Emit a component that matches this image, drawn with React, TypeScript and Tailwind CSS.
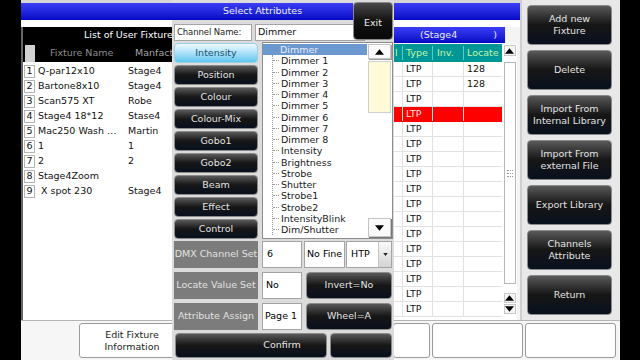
import React from 'react'

const fixtures = [
  { name: 'Q-par12x10', maker: 'Stage4' },
  { name: 'Bartone8x10', maker: 'Stage4' },
  { name: 'Scan575 XT', maker: 'Robe' },
  { name: 'Stage4 18*12', maker: 'Stase4' },
  { name: 'Mac250 Wash …', maker: 'Martin' },
  { name: '1', maker: '1' },
  { name: '2', maker: '2' },
  { name: 'Stage4Zoom', maker: '' },
  { name: ' X spot 230', maker: 'Stage4' },
]

const categories = ['Intensity', 'Position', 'Colour', 'Colour-Mix', 'Gobo1', 'Gobo2', 'Beam', 'Effect', 'Control']

const attributes = [
  'Dimmer 1', 'Dimmer 2', 'Dimmer 3', 'Dimmer 4', 'Dimmer 5', 'Dimmer 6', 'Dimmer 7', 'Dimmer 8',
  'Intensity', 'Brightness', 'Strobe', 'Shutter', 'Strobe1', 'Strobe2', 'IntensityBlink', 'Dim/Shutter',
]

const sideButtons = [
  ['Add new', 'Fixture'],
  ['Delete'],
  ['Import From', 'Internal Library'],
  ['Import From', 'external File'],
  ['Export Library'],
  ['Channels', 'Attribute'],
  ['Return'],
]

const darkBtn =
  'bg-linear-to-b from-[#5a5a5a] via-[#161616] to-[#08101e] text-[#e4e4e4] border border-[#8a8a8a] rounded-[4px] flex items-center justify-center'
const blueBar = 'bg-linear-to-b from-[#3c3cf6] to-[#0404c4]'
const whiteBox = 'bg-white border border-[#a4a4a4] flex items-center'

function Tri({ down }: { down?: boolean }) {
  return (
    <svg viewBox="0 0 10 6" className="w-[9px] h-[6px]">
      <polygon points={down ? '0,0 10,0 5,6' : '0,6 10,6 5,0'} fill="#000" />
    </svg>
  )
}

function FixtureList() {
  return (
    <div className="flex w-[372px] flex-col border-l-2 border-[#666] bg-white">
      <div className="h-[16px] bg-black pl-[61px] leading-[16px] text-white">List of User Fixture</div>
      <div className="flex h-[19px] items-stretch bg-black text-[#8e8e8e]">
        <div className="ml-[2px] mt-[2px] w-[10px] bg-[#d2d2d2]" />
        <div className="ml-[15px] w-[85px] leading-[19px]">Fixture Name</div>
        <div className="leading-[19px] text-[#a4a4a4]">Manfact</div>
      </div>
      <div className="flex flex-col pt-[2px]">
        {fixtures.map((f, i) => (
          <div key={i} className="flex h-[15px] items-center text-[#111]">
            <div className="ml-[1px] flex h-[13px] w-[11px] items-center justify-center border border-[#b4b4b4] bg-white">
              {i + 1}
            </div>
            <div className="ml-[3px] w-[90px] whitespace-pre">{f.name}</div>
            <div>{f.maker}</div>
          </div>
        ))}
      </div>
    </div>
  )
}

function ChannelTable() {
  const rows = Array.from({ length: 17 }, (_, i) => i)
  return (
    <div className="flex w-[127px] flex-col">
      <div className={`flex h-[16px] w-[112px] items-center ${blueBar} text-[#e8e8ff]`}>
        <span className="pl-[27px]">(Stage4</span>
        <span className="ml-auto mr-[8px]">)</span>
      </div>
      <div className="mt-[1px] flex flex-1">
        <div className="flex w-[109px] flex-col bg-white">
          <div className="flex h-[18px] items-center bg-[#009696] text-[#c4f5a8]">
            <div className="w-[9px] pl-[2px]">l</div>
            <div className="w-[30px] border-l border-[#5cc] pl-[3px]">Type</div>
            <div className="w-[31px] border-l border-[#5cc] pl-[4px]">Inv.</div>
            <div className="w-[39px] border-l border-[#5cc] pl-[3px]">Locate</div>
          </div>
          {rows.map((i) => (
            <div
              key={i}
              className={`flex h-[15px] items-center border-b ${
                i === 3 ? 'border-[#f00] bg-[#f00] text-[#ffe4e4]' : 'border-[#e2e2e2] text-[#111]'
              }`}
            >
              <div className="h-full w-[9px]" />
              <div className="flex h-full w-[30px] items-center border-l border-[#e2e2e2] pl-[3px]">LTP</div>
              <div className="h-full w-[31px] border-l border-[#e2e2e2]" />
              <div className="flex h-full w-[39px] items-center border-l border-[#e2e2e2] pl-[3px]">
                {i < 2 ? '128' : ''}
              </div>
            </div>
          ))}
        </div>
        <div className="flex w-[15px] flex-col items-center bg-white pb-[6px] pt-[1px]">
          <div className="flex h-[11px] w-[12px] items-center justify-center border border-[#c8c8c8] bg-[#f4f4f4]">
            <Tri />
          </div>
          <div className="mt-[6px] flex h-[222px] w-[12px] flex-col items-center justify-center gap-[2px] border border-[#b8b8b8] bg-white">
            <div className="h-[1px] w-[6px] border-t border-dotted border-[#999]" />
            <div className="h-[1px] w-[6px] border-t border-dotted border-[#999]" />
            <div className="h-[1px] w-[6px] border-t border-dotted border-[#999]" />
          </div>
          <div className="mt-auto flex h-[10px] w-[12px] items-center justify-center border border-[#c8c8c8] bg-[#f4f4f4]">
            <Tri />
          </div>
          <div className="mt-[1px] flex h-[10px] w-[12px] items-center justify-center border border-[#c8c8c8] bg-[#f4f4f4]">
            <Tri down />
          </div>
        </div>
      </div>
    </div>
  )
}

function MainWindow() {
  return (
    <div className="flex w-[499px] flex-col bg-[#f4f4f4]">
      <div className="h-[3px] bg-[#d6d6d6]" />
      <div className={`h-[17px] ${blueBar}`} />
      <div className="h-[7px] bg-white" />
      <div className="flex flex-1">
        <FixtureList />
        <ChannelTable />
      </div>
    </div>
  )
}

function SidePanel() {
  return (
    <div className="flex w-[100px] flex-col gap-[5px] border-l-2 border-[#cfcfcf] bg-[#e8e8e8] pl-[5px] pt-[5px]">
      {sideButtons.map((lines) => (
        <div key={lines.join()} className={`${darkBtn} h-[40px] w-[85px] flex-col leading-[12px]`}>
          {lines.map((l) => (
            <span key={l}>{l}</span>
          ))}
        </div>
      ))}
    </div>
  )
}

function BottomStrip() {
  const box = 'h-[35px] rounded-[3px] border border-[#9a9a9a] bg-white'
  return (
    <div className="flex h-[40px] items-start border-t border-[#b4b4b4] bg-[#f6f6f6] pt-[2px]">
      <div className={`${box} ml-[58px] flex w-[106px] flex-col items-center justify-center leading-[12px] text-[#222]`}>
        <span>Edit Fixture</span>
        <span>Information</span>
      </div>
      <div className={`${box} ml-[208px] w-[37px]`} />
      <div className={`${box} ml-[2px] w-[91px]`} />
      <div className={`${box} ml-[2px] w-[91px]`} />
    </div>
  )
}

function AttributeDialog() {
  return (
    <div className="absolute left-[151px] top-0 flex h-[360px] w-[222px] flex-col bg-[#dcdcdc] pt-[3px]">
      <div className={`flex h-[17px] w-[181px] items-center justify-center ${blueBar} text-[#eeeeff]`}>
        Select Attributes
      </div>
      <div className="absolute left-[181px] top-[2px] z-10 h-[38px] w-[40px] rounded-[4px] border border-[#8a8a8a] bg-linear-to-b from-[#4a4a4a] via-[#121212] to-[#080808] pt-[1px] text-center leading-[38px] text-[#ececec]">
        Exit
      </div>

      <div className="mt-[4px] flex h-[17px] gap-[3px] pl-[2px]">
        <div className={`${whiteBox} w-[78px] whitespace-nowrap pl-[2px] text-[8.5px] tracking-[-0.1px] text-[#222]`}>
          Channel Name:
        </div>
        <div className={`${whiteBox} w-[110px] pl-[2px] text-[#111]`}>Dimmer</div>
      </div>

      <div className="mt-[1px] flex gap-[4px] pl-[2px]">
        <div className="flex w-[84px] flex-col gap-[2px] pt-[1px]">
          {categories.map((c, i) => (
            <div
              key={c}
              className={
                i === 0
                  ? 'flex h-[20px] items-center justify-center rounded-[4px] border border-[#9ccfe6] bg-linear-to-b from-[#eefaff] to-[#5cc6ef] text-[#17506e]'
                  : `${darkBtn} h-[20px] text-[#d8d8d8]`
              }
            >
              {c}
            </div>
          ))}
        </div>

        <div className="flex h-[197px] w-[131px] border border-[#8c8c8c] bg-white">
          <div className="flex w-[105px] flex-col pt-[1px] leading-[11.25px] text-[#1a1a1a]">
            <div className="h-[11.25px] bg-[#6b98cf] pl-[17px] text-[#e8ecff]">Dimmer</div>
            <div className="ml-[9px] border-l border-dotted border-[#9a9a9a]">
              {attributes.map((a) => (
                <div key={a} className="flex h-[11.25px] items-center">
                  <span className="mr-[2px] w-[6px] border-t border-dotted border-[#9a9a9a]" />
                  <span>{a}</span>
                </div>
              ))}
            </div>
          </div>
          <div className="flex w-[25px] flex-col px-[1px] pb-[1px] pt-[1px]">
            <div className="flex h-[15px] items-center justify-center border border-[#c4c4c4] bg-[#fafafa] shadow-[1px_1px_0_#9a9a9a]">
              <Tri />
            </div>
            <div className="mt-[2px] h-[52px] border border-[#cfcfcf] bg-[#fffad8]" />
            <div className="mt-auto flex h-[19px] items-center justify-center border border-[#c4c4c4] bg-[#fafafa] shadow-[1px_1px_0_#777]">
              <Tri down />
            </div>
          </div>
        </div>
      </div>

      <div className="mt-[2px] flex flex-col gap-[4px] pl-[2px]">
        <div className="flex h-[27px]">
          <div className="flex w-[84px] items-center justify-center bg-[#7c7c7c] text-[#e2e2e2]">DMX Channel Set</div>
          <div className={`${whiteBox} ml-[4px] w-[40px] pl-[4px]`}>6</div>
          <div className={`${whiteBox} ml-[2px] w-[41px] pl-[2px]`}>No Fine</div>
          <div className={`${whiteBox} ml-[1px] w-[46px]`}>
            <span className="flex-1 pl-[4px]">HTP</span>
            <span className="flex h-full w-[13px] items-center justify-center border-l border-[#c4c4c4] bg-linear-to-b from-[#fafafa] to-[#d4d4d4]">
              <svg viewBox="0 0 6 4" className="h-[3px] w-[5px]">
                <polygon points="0,0 6,0 3,4" fill="#222" />
              </svg>
            </span>
          </div>
        </div>
        <div className="flex h-[27px]">
          <div className="flex w-[84px] items-center justify-center bg-[#7c7c7c] text-[#e2e2e2]">Locate Value Set</div>
          <div className={`${whiteBox} ml-[4px] w-[40px] pl-[3px]`}>No</div>
          <div className={`${darkBtn} ml-[4px] w-[86px]`}>Invert=No</div>
        </div>
        <div className="flex h-[27px]">
          <div className="flex w-[84px] items-center justify-center bg-[#7c7c7c] text-[#e2e2e2]">Attribute Assign</div>
          <div className={`${whiteBox} ml-[4px] w-[40px] pl-[2px]`}>Page 1</div>
          <div className={`${darkBtn} ml-[4px] w-[86px]`}>Wheel=A</div>
        </div>
      </div>

      <div className="mt-[3px] flex h-[25px] gap-[3px] pl-[3px]">
        <div className={`${darkBtn} w-[152px] pl-[62px]`}>Confirm</div>
        <div className={`${darkBtn} w-[62px]`} />
      </div>
    </div>
  )
}

export default function App() {
  return (
    <div className="flex h-[360px] w-[640px] overflow-hidden bg-black font-['DejaVu_Sans',sans-serif] text-[9.5px]">
      <div className="w-[21px] shrink-0" />
      <div className="relative flex w-[599px] shrink-0 flex-col">
        <div className="flex h-[320px]">
          <MainWindow />
          <SidePanel />
        </div>
        <BottomStrip />
        <AttributeDialog />
      </div>
      <div className="w-[20px] shrink-0" />
    </div>
  )
}
